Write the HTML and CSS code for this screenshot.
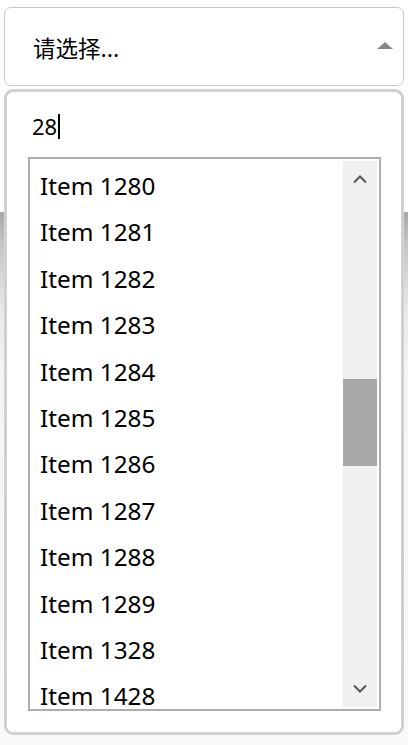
FILE: index.html
```html
<!DOCTYPE html>
<html lang="zh-CN">
<head>
  <meta charset="UTF-8">
  <meta name="viewport" content="width=device-width, initial-scale=1.0">
  <title>下拉选择</title>
  <link rel="stylesheet" href="styles.css">
</head>
<body>

  <div class="select-box">
    <span class="select-text">请选择...</span>
    <span class="select-arrow"></span>
  </div>

  <div class="dropdown">
    <div class="search">
      <span class="search-value">28</span><span class="caret"></span>
    </div>

    <div class="listbox">
      <ul class="options">
        <li>Item 1280</li>
        <li>Item 1281</li>
        <li>Item 1282</li>
        <li>Item 1283</li>
        <li>Item 1284</li>
        <li>Item 1285</li>
        <li>Item 1286</li>
        <li>Item 1287</li>
        <li>Item 1288</li>
        <li>Item 1289</li>
        <li>Item 1328</li>
        <li>Item 1428</li>
      </ul>
      <div class="scrollbar">
        <div class="scroll-btn">
          <svg width="16" height="10" viewBox="0 0 16 10"><path d="M2 8.5 L8 2.5 L14 8.5" fill="none" stroke="#555" stroke-width="2"/></svg>
        </div>
        <div class="scroll-track">
          <div class="scroll-thumb"></div>
        </div>
        <div class="scroll-btn">
          <svg width="16" height="10" viewBox="0 0 16 10"><path d="M2 1.5 L8 7.5 L14 1.5" fill="none" stroke="#555" stroke-width="2"/></svg>
        </div>
      </div>
    </div>
  </div>

</body>
</html>
```

FILE: styles.css
```css
body {
  margin: 0;
  padding: 7px 4px 0;
  height: 745px;
  box-sizing: border-box;
  font-family: "Noto Sans", "Noto Sans CJK SC", sans-serif;
  color: #000;
  background: linear-gradient(to bottom, #ffffff 0, #ffffff 212px, #a9a9a9 212px, #c8c8c8 250px, #e8e9e9 310px, #f4f5f6 380px, #f7f9f9 100%);
}
.select-box {
  height: 79px;
  box-sizing: border-box;
  border: 1px solid #c8c8c8;
  border-radius: 7px;
  background: #fff;
  display: flex;
  align-items: center;
  justify-content: space-between;
  padding: 0 10px 0 28px;
}
.select-text {
  font-family: "Noto Sans CJK SC", sans-serif;
  font-size: 22.5px;
}
.select-arrow {
  width: 0;
  height: 0;
  border-left: 8px solid transparent;
  border-right: 8px solid transparent;
  border-bottom: 7px solid #888;
  margin-top: -2px;
}
.dropdown {
  margin-top: 3px;
  height: 646px;
  box-sizing: border-box;
  border: 3px solid #d0d0d0;
  border-radius: 9px;
  background: #fff;
  padding: 14px 20px 20px 21px;
}
.search {
  height: 40px;
  padding-left: 4px;
  display: flex;
  align-items: center;
  font-size: 22px;
  margin-bottom: 11px;
}
.caret {
  display: inline-block;
  width: 1.5px;
  height: 25px;
  background: #000;
  margin-left: 1px;
}
.listbox {
  height: 554px;
  box-sizing: border-box;
  border: 2px solid #acacb3;
  display: flex;
}
.options {
  list-style: none;
  margin: 0;
  padding: 4px 0 0 10px;
  flex: 1;
  overflow: hidden;
}
.options li {
  height: 46.4px;
  line-height: 46.4px;
  font-size: 24.3px;
  white-space: nowrap;
}
.scrollbar {
  width: 34px;
  margin: 2px;
  background: #f0f0f0;
  display: flex;
  flex-direction: column;
}
.scroll-btn {
  height: 36px;
  display: flex;
  align-items: center;
  justify-content: center;
}
.scroll-track {
  flex: 1;
}
.scroll-thumb {
  margin-top: 182px;
  height: 87px;
  background: #a8a8a8;
}
```
